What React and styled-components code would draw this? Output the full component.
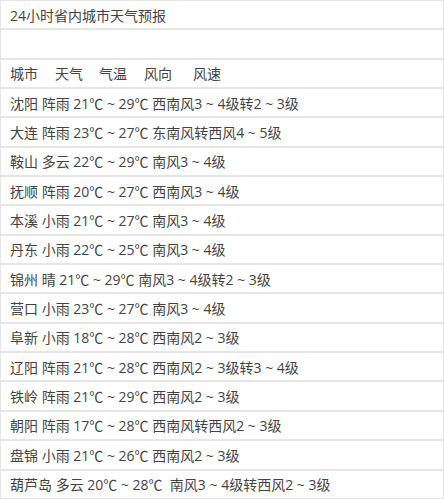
import React from "react";
import styled, { createGlobalStyle } from "styled-components";

const GlobalStyle = createGlobalStyle`
  html, body {
    margin: 0;
    padding: 0;
    background: #fff;
  }
  body {
    font-family: "Open Sans", "Noto Sans CJK SC", sans-serif;
    font-size: 14px;
    color: #444;
  }
`;

const Table = styled.div`
  width: 444px;
  display: flex;
  flex-direction: column;
`;

const Row = styled.div`
  box-sizing: border-box;
  height: 29.35px;
  display: flex;
  align-items: center;
  padding-left: 9px;
  border: 1px solid #e6e6e6;
  white-space: pre;
`;

const HeadCell = styled.span`
  margin-right: ${(props) => props.gap || 0}px;
`;

const title = "24小时省内城市天气预报";

const heads = [
  ["城市", 17],
  ["天气", 16],
  ["气温", 17],
  ["风向", 21],
  ["风速", 0],
];

const rows = [
  "沈阳 阵雨 21℃ ~ 29℃ 西南风3 ~ 4级转2 ~ 3级",
  "大连 阵雨 23℃ ~ 27℃ 东南风转西风4 ~ 5级",
  "鞍山 多云 22℃ ~ 29℃ 南风3 ~ 4级",
  "抚顺 阵雨 20℃ ~ 27℃ 西南风3 ~ 4级",
  "本溪 小雨 21℃ ~ 27℃ 南风3 ~ 4级",
  "丹东 小雨 22℃ ~ 25℃ 南风3 ~ 4级",
  "锦州 晴 21℃ ~ 29℃ 南风3 ~ 4级转2 ~ 3级",
  "营口 小雨 23℃ ~ 27℃ 南风3 ~ 4级",
  "阜新 小雨 18℃ ~ 28℃ 西南风2 ~ 3级",
  "辽阳 阵雨 21℃ ~ 28℃ 西南风2 ~ 3级转3 ~ 4级",
  "铁岭 阵雨 21℃ ~ 29℃ 西南风2 ~ 3级",
  "朝阳 阵雨 17℃ ~ 28℃ 西南风转西风2 ~ 3级",
  "盘锦 小雨 21℃ ~ 26℃ 西南风2 ~ 3级",
  "葫芦岛 多云 20℃ ~ 28℃  南风3 ~ 4级转西风2 ~ 3级",
];

export default function App() {
  return (
    <>
      <GlobalStyle />
      <Table>
        <Row>{title}</Row>
        <Row />
        <Row>
          {heads.map(([h, gap]) => (
            <HeadCell key={h} gap={gap}>{h}</HeadCell>
          ))}
        </Row>
        {rows.map((r) => (
          <Row key={r}>{r}</Row>
        ))}
      </Table>
    </>
  );
}
